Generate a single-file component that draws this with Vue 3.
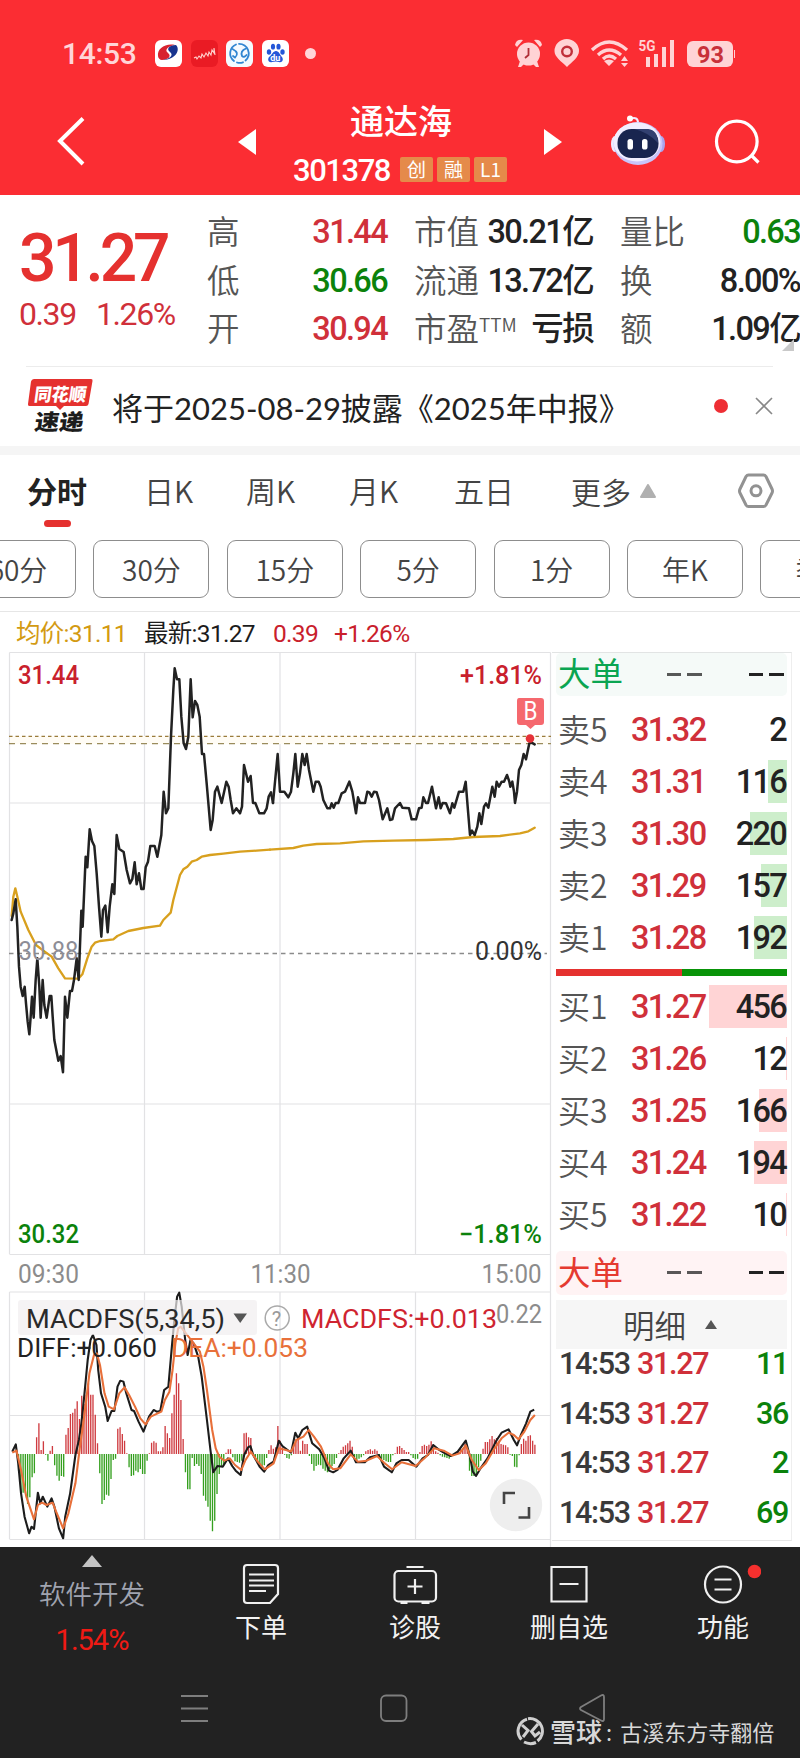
<script setup>
const quotes = [
  ['高', '31.44', 'red', '市值', '', '30.21亿', '量比', '0.63', 'green'],
  ['低', '30.66', 'green', '流通', '', '13.72亿', '换', '8.00%', 'ink'],
  ['开', '30.94', 'red', '市盈', 'TTM', '亏损', '额', '1.09亿', 'ink'],
]
const tabs = ['分时', '日K', '周K', '月K', '五日']
const periods = ['60分', '30分', '15分', '5分', '1分', '年K', '季K']
const sells = [
  ['卖5', '31.32', '2', 0], ['卖4', '31.31', '116', 19], ['卖3', '31.30', '220', 37],
  ['卖2', '31.29', '157', 26], ['卖1', '31.28', '192', 33],
]
const buys = [
  ['买1', '31.27', '456', 78], ['买2', '31.26', '12', 1], ['买3', '31.25', '166', 28],
  ['买4', '31.24', '194', 33], ['买5', '31.22', '10', 1],
]
const trades = ['11', '36', '2', '69']

const priceA = '35,840 40,820 47,778 52,860 57,980 62,1040 68,1068 74,1040 78,1090 83,1145 88,1183 92,1130 96,1070 101,1133 107,1020 112,955 118,1040 122,1133 128,1020 133,1095 140,1133 149,1068 154,1068 158,1130 163,1200 175,1262 182,1248 189,1297 195,1070 202,1133 210,1053 216,1053 222,1020 230,955 236,1020 244,812 248,860 257,650 262,682 269,568 276,603 283,618 290,700 297,800 304,890 309,810 316,797 323,877 329,800 337,733 343,762 350,585 358,627 371,636 380,690 390,730 397,717 404,667 410,733 417,700 424,747 431,747 437,682 444,665 451,618 464,618 472,650 484,585 491,455 498,520 505,505 513,290 520,150 524,85 531,118 538,118 544,230 551,310 558,327 565,290 572,118 578,232 585,183 592,195 599,230 606,342 612,342 620,430 632,570 638,540 645,455 652,440 665,489 679,425 686,440 692,480 699,520 709,505 720,520 726,500 732,375 744,425 752,408 759,489 766,489 778,520 792,520 800,505 806,470 813,457 819,489'
const priceB = '9,489 23,342 30,455 43,455 55,472 63,455 70,400 76,342 83,440 90,400 97,342 104,375 110,342 117,390 130,455 137,425 146,425 152,440 160,480 172,505 180,505 185,490 191,503 197,489 205,489 215,460 225,455 238,425 247,455 258,520 264,472 270,489 285,489 292,455 298,457 305,470 312,455 320,457 327,480 338,538 352,505 360,540 367,538 375,505 390,489 397,503 417,505 425,538 438,538 447,505 455,503 460,472 468,489 474,489 486,440 498,505 506,472 512,505 518,489 528,490 540,520 547,490 553,503 567,455 580,455 587,425 593,500 600,585 606,572 614,585 622,560 628,520 634,552 642,500 648,490 655,503 667,440 674,470 680,425 687,440 695,425 702,425 711,405 718,425 721,440 727,425 732,455 735,489 741,455 747,390 754,375 761,342 768,358 778,310 785,308 794,313'
const avgA = '35,828 40,770 46,745 52,770 62,815 85,870 108,915 130,932 155,950 175,985 195,1015 235,1016 247,1003 262,955 275,920 285,908 300,903 340,898 352,888 385,873 430,864 480,857 490,840 512,818 520,780 540,705 550,688 562,680 575,665 590,660 605,650 630,645 670,641 720,635 770,632 810,629'
const avgB = '0,629 70,624 100,617 140,612 210,610 280,604 370,602 470,600 550,597 610,591 690,588 750,580 775,574 794,563'
const diff = '35,725 45,703 52,760 60,850 70,920 83,970 90,950 97,957 108,848 115,880 122,860 135,890 147,865 155,890 168,955 180,985 186,920 200,850 215,735 225,690 232,640 240,560 250,450 258,390 265,375 275,405 280,480 288,550 300,590 307,633 318,603 326,603 335,530 343,512 352,515 360,550 375,600 382,603 395,635 409,665 425,620 438,600 447,605 457,603 468,540 480,530 490,410 497,330 505,260 511,248 518,290 528,390 535,435 543,390 552,400 565,440 575,500 590,630 600,720 608,787 620,768 635,770 650,745 662,768 672,782 686,795 696,735 707,712 714,708 722,735 740,770 753,785 765,765 780,755 795,692 805,708 830,728 842,668 850,685 862,660 876,650 890,700 910,718 925,745 938,782 950,787 962,780 980,745 1000,722 1015,757 1040,757 1055,742 1080,735 1095,770 1117,787 1130,760 1145,750 1165,750 1187,770 1205,745 1220,735 1235,705 1250,718 1265,728 1285,738 1305,725 1328,692 1340,740 1348,785 1357,798 1370,775 1390,745 1415,692 1430,668 1450,658 1465,690 1474,706 1485,675 1500,640 1512,605 1523,599'
const dea = '35,728 47,722 60,780 75,860 97,928 108,885 120,878 133,885 150,878 160,905 180,955 195,910 215,820 228,710 240,620 255,490 268,435 276,430 285,465 298,550 310,590 325,598 340,550 355,532 368,555 385,590 400,625 415,643 430,620 460,605 470,570 483,545 492,480 500,400 508,355 515,350 530,370 545,390 570,425 580,470 590,540 605,660 615,715 625,740 640,752 655,745 670,765 688,780 700,750 715,725 735,755 755,778 780,760 795,715 815,720 830,725 845,690 865,680 880,660 895,680 915,710 935,760 950,778 970,775 1000,733 1020,755 1045,752 1075,738 1095,758 1118,778 1145,757 1185,768 1210,745 1238,715 1265,722 1290,737 1310,730 1328,706 1345,750 1365,780 1385,760 1410,715 1430,685 1450,668 1465,675 1478,688 1495,665 1512,630 1525,615'
const heights = [-50, -116, -116, -118, -150, -130, -70, -58, 50, 92, 12, 38, -2, -20, 10, 24, -34, -65, -80, -66, -68, 58, 78, 120, 124, 136, 158, 105, 175, 150, 178, 212, 178, 178, 118, 32, -58, -150, -138, -122, -125, -75, -18, -14, 76, 80, 60, 40, 2, -40, -66, -64, -50, -55, -45, -60, -60, -20, 2, 34, 38, 34, 8, 8, 20, 84, 62, 48, 122, 178, 242, 212, 162, 45, -55, -106, -106, -12, -36, -30, -36, -60, -125, -140, -158, -200, -232, -200, -120, -60, -36, -30, 4, 14, 14, -10, -22, -24, -26, -20, 62, 64, 50, 48, -6, -16, -30, -36, -42, -34, -12, 12, 26, 16, 20, 84, 40, 20, -2, -12, -14, -4, 30, 44, 48, 10, 40, 30, 30, -6, -30, -50, -36, -32, -34, -44, -50, -55, -46, -36, -30, -12, 2, 12, 22, 26, 32, 40, 22, -10, -18, -14, -10, -4, 8, 12, 14, 10, 14, 10, -6, -14, -18, -22, -24, -24, -4, 2, 22, 24, 18, 12, 6, 6, -4, -12, -16, -14, 6, 24, 28, 24, 28, 38, 20, 8, 4, -4, -8, -10, -12, -14, -8, -6, 6, 10, 14, 16, 30, 22, -50, -66, -66, -60, -40, -20, 16, 36, 36, 44, 54, 44, 48, 40, 30, 28, 26, 20, -2, -6, -38, -40, -4, 30, 46, 40, 54, 56, 40, 28]
const step = (1525 - 53) / (heights.length - 1)
const bars = (up) => heights
  .map((h, i) => (h > 0 === up ? `M${(53 + i * step).toFixed(1)} 732V${732 - h}` : ''))
  .join('')
</script>

<template>
  <div class="page">
    <header class="head">
      <div class="status">
        <span class="clock">14:53</span>
        <div class="apps">
          <svg width="27" height="27" viewBox="0 0 27 27">
            <rect width="27" height="27" rx="6" fill="#fff" />
            <path d="M3 16C2 9 10 3 20 5C13 6 9 10 13 13C17 16 13 20 7 20C5 20 3 18 3 16Z" fill="#d8232f" />
            <path d="M21 5C26 10 20 20 8 20C15 19 19 15 15 12C11 9 14 5 21 5Z" fill="#17348f" />
          </svg>
          <svg width="27" height="27" viewBox="0 0 27 27">
            <rect width="27" height="27" rx="6" fill="#ea1b24" />
            <path d="M3 18L5 17L6 19L8 16L10 18L11 14L13 17L15 13L17 16L18 12L20 15L21 10L23 13V8L24 15" fill="none" stroke="#ffd0cc" stroke-width="1.1" />
          </svg>
          <svg width="27" height="27" viewBox="0 0 27 27">
            <rect width="27" height="27" rx="6" fill="#f4faff" />
            <g fill="none" stroke="#3186d2" stroke-width="1.8" stroke-linecap="round">
              <path d="M10 4.500A9.600 9.600 0 0 0 8 21M13 3.800A9.600 9.600 0 0 1 19.500 20.500M11 22.500Q14 23.500 17 22.300" />
              <path d="M6.500 9Q14 13 9 17.500L7 16M20 8.500Q14 11 16 16Q18 18 20.500 15" />
            </g>
          </svg>
          <svg width="27" height="27" viewBox="0 0 27 27">
            <rect width="27" height="27" rx="6" fill="#fff" />
            <g fill="#2456d8">
              <ellipse cx="7" cy="12" rx="2.2" ry="2.8" />
              <ellipse cx="11" cy="6.7" rx="2.1" ry="2.9" />
              <ellipse cx="16.5" cy="6.7" rx="2.1" ry="2.9" />
              <ellipse cx="20.5" cy="12" rx="2.2" ry="2.8" />
              <path d="M14 11C17 11 18 15 20 17C22 20 20 23 17 22Q14 21 10 22C7 23 5 20 7 17C10 15 11 11 14 11Z" />
            </g>
            <text x="8.2" y="20.5" class="du">du</text>
          </svg>
        </div>
        <i class="dot-pink"></i>
        <svg class="sys" width="222" height="32" viewBox="512 38 222 32">
          <g fill="#ffd3d5">
            <circle cx="527.5" cy="54" r="11.5" />
            <path d="M514 45Q515 39 522 40L516 47ZM541 45Q540 39 533 40L539 47Z" />
            <path d="M519 61L517 67H520L524 63ZM536 61L538 67H535L531 63Z" />
            <path d="M566 67C560 61 553.500 57 553.500 51A12.200 12 0 0 1 578 51C578 57 571 62 566 67Z" />
            <path d="M603 61Q608 58 613 61L608 66ZM620 61L623.500 56L627 61ZM620 63L623.500 67L627 63Z" />
            <path d="M645 57h4v10h-4zM653 54h4v13h-4zM661 47h4v20h-4zM669 40h4v27h-4z" />
            <rect x="686" y="41" width="46" height="26" rx="6" />
            <path d="M733 50h1.500v8h-1.500z" />
          </g>
          <path d="M527.500 48V55L524 58" fill="none" stroke="#b03038" stroke-width="1.800" />
          <circle cx="566" cy="51.500" r="4.800" fill="none" stroke="#c12f3a" stroke-width="2.400" />
          <g fill="none" stroke="#ffd3d5" stroke-width="3.300">
            <path d="M591 50Q608 34 626 50M597 55Q608 45 620 55" />
            <path d="M602 59Q608 53 615 59" />
          </g>
          <text x="637.500" y="50.500" class="g5" textLength="17" lengthAdjust="spacingAndGlyphs">5G</text>
          <text x="696" y="62.500" class="bat" textLength="27" lengthAdjust="spacingAndGlyphs">93</text>
        </svg>
      </div>
      <div class="titlebar">
        <svg class="back" width="30" height="50" viewBox="0 0 30 50"><path d="M27 2.500L4 25L27 48" /></svg>
        <svg class="prev" width="18" height="26" viewBox="0 0 18 26"><path d="M18 0V26L0 13Z" /></svg>
        <div class="name">
          <h1>通达海</h1>
          <p><b class="num">301378</b><i>创</i><i>融</i><i>L1</i></p>
        </div>
        <svg class="next" width="18" height="26" viewBox="0 0 18 26"><path d="M0 0V26L18 13Z" /></svg>
        <svg class="robot" width="56" height="51" viewBox="610 115 56 51">
          <path d="M630 119Q638 116 638 123" fill="none" stroke="#f4e9ff" stroke-width="2" />
          <circle cx="630" cy="118.500" r="3" fill="#fff" />
          <ellipse cx="615" cy="144" rx="4" ry="8" fill="#efeaff" />
          <ellipse cx="661" cy="144" rx="4" ry="8" fill="#a9a4ee" />
          <ellipse cx="638" cy="143.500" rx="24.500" ry="21.500" fill="#c8c4fa" />
          <ellipse cx="637" cy="142" rx="23.500" ry="19.500" fill="#f1eeff" />
          <rect x="617.500" y="129" width="41" height="29" rx="14" fill="#19254f" />
          <path d="M634 129H648Q658 130 658 143Q648 132 634 129Z" fill="#324070" />
          <rect x="627.500" y="139" width="5.500" height="10.500" rx="2.600" fill="#fff" />
          <rect x="642" y="139" width="5.500" height="10.500" rx="2.600" fill="#fff" />
        </svg>
        <svg class="search" width="46" height="46" viewBox="714 118 46 46">
          <circle cx="736.800" cy="141.500" r="20.300" /><path d="M751 155L758.500 162.500" />
        </svg>
      </div>
    </header>

    <section class="quote">
      <div class="price">
        <strong class="num">31.27</strong>
        <p class="num"><span>0.39</span><span>1.26%</span></p>
      </div>
      <div class="stats">
        <div v-for="q in quotes" :key="q[0]" class="stat">
          <label>{{ q[0] }}</label><b class="num" :class="q[2]">{{ q[1] }}</b>
          <label class="l2">{{ q[3] }}<sup v-if="q[4]">{{ q[4] }}</sup></label><b class="num ink">{{ q[5] }}</b>
          <label class="l3">{{ q[6] }}</label><b class="num" :class="q[8]">{{ q[7] }}</b>
        </div>
        <svg class="corner" width="12" height="12"><path d="M12 0V12H0Z" fill="#c9c9c9" /></svg>
      </div>
    </section>

    <section class="news">
      <svg width="68" height="56" viewBox="27 379 68 56">
        <path d="M34 380H91Q93 380 92.500 382L88.500 405Q88 407 86 407H64L60 411L56 407H29.500Q27.500 407 28 405L31 382.500Q31.500 380 34 380Z" fill="#e5312f" />
        <g transform="skewX(-8)">
          <text x="90" y="402" class="ths" textLength="52" lengthAdjust="spacingAndGlyphs">同花顺</text>
          <text x="94.500" y="431.500" class="sd" textLength="49" lengthAdjust="spacingAndGlyphs">速递</text>
        </g>
      </svg>
      <span class="headline">将于2025-08-29披露《2025年中报》</span>
      <i class="reddot"></i>
      <svg class="close" width="18" height="18" viewBox="0 0 18 18"><path d="M1 1L17 17M17 1L1 17" /></svg>
    </section>

    <nav class="tabs">
      <span v-for="(t, i) in tabs" :key="t" :class="{ on: i === 0 }">{{ t }}</span>
      <span class="more">更多<svg width="16" height="14" viewBox="0 0 16 14"><path d="M8 1L15 13H1Z" fill="#b0b0b0" stroke="#b0b0b0" stroke-width="2" stroke-linejoin="round" /></svg></span>
      <svg class="hex" width="36" height="36" viewBox="0 0 36 36">
        <path d="M10.500 2H25.500Q27 2 28 3.500L34 16Q35 18 34 20L28 32Q27 33.500 25.500 33.500H10.500Q9 33.500 8 32L2 20Q1 18 2 16L8 3.500Q9 2 10.500 2Z" />
        <circle cx="18" cy="17.800" r="5" />
      </svg>
    </nav>
    <div class="periods"><span v-for="p in periods" :key="p">{{ p }}</span></div>

    <p class="legend num"><span class="avg">均价:31.11</span><span class="last">最新:31.27</span><span class="chg">0.39</span><span>+1.26%</span></p>

    <main class="body">
      <svg class="chart" width="552" height="895" viewBox="0 652 552 895">
        <path class="grid" d="M9.500 652.500H550.500M9.500 803H550.500M9.500 1104H550.500M9.500 1254.500H550.500M9.500 652.500V1254M144.500 652.500V1254M280 652.500V1254M415.500 652.500V1254M550.500 652.500V1547M9.500 1292H550.500M9.500 1415.500H550.500M9.500 1539.500H550.500M9.500 1292V1539M144.500 1292V1539M280 1292V1539M415.500 1292V1539" />
        <rect x="10" y="736" width="540" height="8" fill="#fffcf5" />
        <path d="M9 736.300H551" stroke="#9a7c3c" stroke-width="1.300" stroke-dasharray="3.500 3" />
        <path d="M9 743.700H551" stroke="#9a8c5c" stroke-width="1.300" stroke-dasharray="6 5" />
        <path d="M9 953.500H547" stroke="#8b8b8b" stroke-width="1.300" stroke-dasharray="4.500 4" />
        <g transform="translate(0 640) scale(.33333)" class="line">
          <polyline class="gold" :points="avgA" />
          <polyline class="black" :points="priceA" />
          <g transform="translate(810 0)">
            <polyline class="gold" :points="avgB" />
            <polyline class="black" :points="priceB" />
          </g>
        </g>
        <path d="M519 698H541Q544 698 544 701V722Q544 725 541 725H535L530.500 729L526 725H520Q517 725 517 722V701Q517 698 519 698Z" fill="#f5686e" />
        <text x="523.500" y="719.500" class="t" fill="#fff" textLength="14" lengthAdjust="spacingAndGlyphs">B</text>
        <circle cx="530" cy="738.500" r="4.300" fill="#e53238" />

        <g class="t">
          <text x="18" y="683.500" class="m" fill="#c9202c" textLength="61" lengthAdjust="spacingAndGlyphs">31.44</text>
          <text x="460" y="683.500" class="m" fill="#c9202c" textLength="82" lengthAdjust="spacingAndGlyphs">+1.81%</text>
          <text x="18.500" y="960" fill="#8d8d96" textLength="60" lengthAdjust="spacingAndGlyphs">30.88</text>
          <text x="475" y="960" fill="#333" textLength="67" lengthAdjust="spacingAndGlyphs">0.00%</text>
          <text x="18" y="1242.500" class="m" fill="#0b820b" textLength="61" lengthAdjust="spacingAndGlyphs">30.32</text>
          <text x="459" y="1242.500" class="m" fill="#0b820b" textLength="83" lengthAdjust="spacingAndGlyphs">−1.81%</text>
          <g fill="#8c8c8c">
            <text x="18" y="1282.500" textLength="61" lengthAdjust="spacingAndGlyphs">09:30</text>
            <text x="250.500" y="1282.500" textLength="60" lengthAdjust="spacingAndGlyphs">11:30</text>
            <text x="481.500" y="1282.500" textLength="60" lengthAdjust="spacingAndGlyphs">15:00</text>
          </g>
        </g>

        <g transform="translate(0 1210) scale(.35075 .33333)">
          <path :d="bars(true)" stroke="#cf3b40" stroke-width="3.800" />
          <path :d="bars(false)" stroke="#35a01f" stroke-width="3.800" />
          <g class="macd">
            <polyline :points="diff" stroke="#1c1c1c" />
            <polyline :points="dea" stroke="#e8703a" />
          </g>
        </g>
        <rect x="18" y="1300" width="239" height="35" rx="3" fill="#f1eef0" fill-opacity=".7" />
        <path d="M233.500 1313.500H247L240.200 1323Z" fill="#555" />
        <circle cx="277.200" cy="1318" r="12" fill="none" stroke="#aaa" stroke-width="1.500" />
        <text x="271.800" y="1325.500" class="q">?</text>
        <g class="t">
          <text x="26" y="1327.500" fill="#2a2a2a" textLength="199" lengthAdjust="spacingAndGlyphs">MACDFS(5,34,5)</text>
          <text x="496" y="1323" fill="#8c8c8c" textLength="46" lengthAdjust="spacingAndGlyphs">0.22</text>
          <text x="301" y="1327.500" fill="#cf2430" textLength="196" lengthAdjust="spacingAndGlyphs">MACDFS:+0.013</text>
          <text x="17" y="1357" fill="#222" textLength="140" lengthAdjust="spacingAndGlyphs">DIFF:+0.060</text>
          <text x="171" y="1357" fill="#e8703a" textLength="137" lengthAdjust="spacingAndGlyphs">DEA:+0.053</text>
        </g>
        <circle cx="516" cy="1505" r="26.200" fill="#eee" />
        <path d="M504 1504V1493H515M518.500 1517.500H529V1507" fill="none" stroke="#444" stroke-width="2.600" />
      </svg>

      <aside class="book">
        <div class="big sellbig"><em>大单</em><s class="g"></s><s></s></div>
        <div class="rows">
          <div v-for="r in sells" :key="r[0]" class="row sell">
            <label>{{ r[0] }}</label><b class="num red">{{ r[1] }}</b>
            <b class="num qty"><i :style="{ width: r[3] + 'px' }"></i><span>{{ r[2] }}</span></b>
          </div>
        </div>
        <div class="ratio"><i></i></div>
        <div class="rows">
          <div v-for="r in buys" :key="r[0]" class="row buy">
            <label>{{ r[0] }}</label><b class="num red">{{ r[1] }}</b>
            <b class="num qty"><i :style="{ width: r[3] + 'px' }"></i><span>{{ r[2] }}</span></b>
          </div>
        </div>
        <div class="big buybig"><em>大单</em><s class="g"></s><s></s></div>
        <div class="detail">明细<svg width="12" height="9"><path d="M6 0L12 9H0Z" fill="#555" /></svg></div>
        <div class="trades">
          <div v-for="t in trades" :key="t" class="num"><span>14:53</span><b class="red">31.27</b><b class="green">{{ t }}</b></div>
        </div>
      </aside>
    </main>

    <footer class="foot">
      <div class="menu">
        <div class="index">
          <svg width="20" height="12"><path d="M10 0L20 12H0Z" fill="#c4c4c4" /></svg>
          <span>软件开发</span><b>1.54%</b>
        </div>
        <div class="item">
          <svg width="46" height="44" viewBox="238 1562 46 44"><path d="M247 1565H275Q278 1565 278 1568V1594L270 1603H247Q244 1603 244 1600V1568Q244 1565 247 1565Z" /><path d="M249 1574.500H274M249 1580.500H274M249 1585.500H274M249 1591H266" /></svg>
          <span>下单</span>
        </div>
        <div class="item">
          <svg width="46" height="44" viewBox="391.500 1562 46 44"><rect x="394" y="1571" width="41.500" height="30.500" rx="4" /><path d="M406 1567H423M414.500 1579V1594M407 1586.500H422M400 1603H407M421 1603H429" /></svg>
          <span>诊股</span>
        </div>
        <div class="item">
          <svg width="46" height="44" viewBox="545.500 1562 46 44"><path d="M551 1567H586V1601.500H551ZM559 1584H578" /></svg>
          <span>删自选</span>
        </div>
        <div class="item">
          <svg width="76" height="44" viewBox="684.500 1562 76 44"><circle cx="722.500" cy="1584.500" r="18" /><path d="M714 1579.500H731M714 1589.500H731" /><circle class="alert" cx="754" cy="1571.500" r="6.800" /></svg>
          <span>功能</span>
        </div>
      </div>
      <div class="sysnav">
        <svg width="28" height="30" viewBox="0 0 28 30"><path d="M0 2H27M0 14.500H27M0 27H27" /></svg>
        <svg width="28" height="30" viewBox="0 0 28 30"><rect x="1" y="1.500" width="25.500" height="25.500" rx="5" /></svg>
        <svg width="28" height="30" viewBox="0 0 28 30"><path d="M25 3V25Q25 28 22 26.500L2 16Q0 14.500 2 13L22 1.500Q25 0 25 3Z" /></svg>
      </div>
      <div class="mark">
        <svg width="29" height="30" viewBox="0 0 29 30"><path d="M11 3.200A12.300 12.300 0 0 0 5.500 23.500M12 2.700A12.500 12.500 0 0 1 21.500 25M8 26Q14 29 20 26.500M6 9L12 14.500L7 21M22 8L15.500 15.500L19 20L24 16" /></svg>
        <b>雪球</b><span>:</span><span>古溪东方寺翻倍</span>
      </div>
    </footer>
  </div>
</template>

<style>
body { margin: 0; background: #fff; }
</style>
<style scoped>
.page { width: 800px; height: 1758px; overflow: hidden; background: #fff; color: #222; font-family: "Noto Sans CJK SC", sans-serif; }
.page * { box-sizing: border-box; }
svg { display: block; flex: none; }
i, em { font-style: normal; }
h1, p { margin: 0; }
.num { font-family: Roboto, "Noto Sans CJK SC", sans-serif; font-weight: 500; letter-spacing: -.045em; }
.red { color: #d0303a; }
.green { color: #0b820b; }
.ink { color: #222; }
.head { height: 195px; background: #fb2d33; color: #fff; }
.status { display: flex; align-items: center; height: 96px; padding: 11px 0 0 62px; }
.clock { width: 93px; font: 500 30px/30px Roboto, sans-serif; letter-spacing: -.3px; color: #ffd5d8; }
.apps { display: flex; gap: 8.500px; }
.dot-pink { width: 11px; height: 11px; margin-left: 16px; border-radius: 50%; background: #ffd5d8; }
.sys { margin-left: 197px; }
.du { font: 700 9px Roboto, sans-serif; fill: #fff; }
.g5 { font: 700 14px Roboto, sans-serif; fill: #ffd3d5; }
.bat { font: 700 23px Roboto, sans-serif; fill: #c8303a; }
.titlebar { display: flex; align-items: flex-start; height: 99px; }
.titlebar svg { fill: none; stroke: #fff; stroke-width: 3.500; }
.titlebar .prev, .titlebar .next { fill: #fff; stroke: none; margin-top: 33px; }
.titlebar .robot { stroke: none; margin: 19px 0 0 48px; }
.titlebar .search { margin: 22px 0 0 48px; stroke-width: 3.200; }
.titlebar .back { margin: 20px 0 0 56px; stroke-width: 4; }
.prev { margin-left: 152px; }
.name { width: 216px; margin: 0 35px 0 37px; }
.name h1 { font-size: 34px; line-height: 44px; font-weight: 500; margin-top: 2px; text-align: center; }
.name p { display: flex; gap: 4px; margin-top: 14px; white-space: nowrap; text-align: center; }
.name b { width: 103px; font-size: 31px; line-height: 29px; letter-spacing: -1.450px; text-align: left; }
.name i { width: 33px; height: 25px; margin-top: 1px; border-radius: 2px; background: #e58a4a; font-size: 19px; line-height: 24px; }
.quote { display: flex; height: 171px; padding-top: 12px; }
.price { width: 207px; padding-left: 19px; color: #e5312f; }
.price strong { display: block; margin-top: 23px; font-size: 66px; line-height: 58px; letter-spacing: -4.200px; }
.price p { display: flex; margin-top: 6px; font-size: 32px; line-height: 40px; letter-spacing: -1.400px; color: #d0303a; font-weight: 400; }
.price p span:first-child { width: 77px; }
.stats { flex: 1; position: relative; }
.stat { display: grid; grid-template-columns: 60px 120px 86px 120px 76px 131px; height: 48.500px; line-height: 51px; font-size: 32.500px; letter-spacing: -.5px; }
.stat label { font-size: 32.500px; line-height: 46px; font-weight: 350; color: #555; white-space: nowrap; letter-spacing: 0; }
.stat .l2, .stat .l3 { padding-left: 27px; }
.stat b { text-align: right; white-space: nowrap; letter-spacing: -1.650px; }
.stat sup { font-size: 19px; line-height: 0; vertical-align: 9px; }
.corner { position: absolute; right: 6px; bottom: 15px; }
.news { display: flex; align-items: center; height: 89px; margin: 0; padding: 0 27px; border-bottom: 9px solid #f5f5f5; background: linear-gradient(#ececec, #ececec) 26px 0 / 747px 1px no-repeat; }
.headline { margin: 0 0 0 17px; width: 603px; font-family: Lato, "Noto Sans CJK SC", sans-serif; font-size: 31px; letter-spacing: 0; white-space: nowrap; font-weight: 400; }
.reddot { width: 14px; height: 14px; margin-left: 1px; border-radius: 50%; background: #ee2e34; }
.close { margin-left: 27px; fill: none; stroke: #888; stroke-width: 1.600; }
.ths { font: 900 18px "Noto Sans CJK SC", sans-serif; fill: #fff; }
.sd { font: 900 22px "Noto Sans CJK SC", sans-serif; fill: #1c1c1c; }
.tabs { display: grid; grid-template-columns: 117px 102px 103px 105px 117px 167px 40px; height: 85px; padding-left: 28px; font-size: 30px; line-height: 71px; font-weight: 350; color: #444; }
.tabs span { position: relative; left: -1px; white-space: nowrap; }
.tabs .on { font-weight: 700; color: #222; }
.tabs .on::after { content: ""; position: absolute; left: 17px; top: 65px; width: 27px; height: 7px; border-radius: 4px; background: #e5312f; }
.more { display: flex; align-items: center; gap: 9px; height: 72px; }
.hex { margin: 18px 0 0 -1px; fill: none; stroke: #929292; stroke-width: 3; }
.periods { display: flex; gap: 17.400px; height: 72px; margin-left: -40px; border-bottom: 1px solid #e6e6e6; width: 840px; overflow: hidden; }
.periods span { flex: none; width: 116px; height: 58px; border: 1.500px solid #8d8d8d; border-radius: 9px; font-size: 28px; line-height: 56px; font-weight: 350; text-align: center; color: #444; }
.legend { display: flex; height: 40px; padding-left: 16px; font-size: 24.500px; line-height: 43px; letter-spacing: -.7px; color: #c9202c; white-space: nowrap; font-weight: 400; }
.avg { width: 128px; color: #d39a12; }
.last { width: 129px; color: #1c1c1c; }
.chg { width: 61px; }
.body { display: flex; height: 895px; }
.grid { fill: none; stroke: #e2e2e4; stroke-width: 1.200; }
.line polyline { fill: none; stroke-linejoin: round; stroke-linecap: round; }
.gold { stroke: #d8a01e; stroke-width: 7; }
.black { stroke: #222; stroke-width: 7.500; }
.macd polyline { fill: none; stroke-width: 6; stroke-linejoin: round; }
.t { font: 400 25.500px Roboto, sans-serif; }
.m { font-weight: 500; }
.q { font: 400 20px Roboto, sans-serif; fill: #999; }
.book { width: 240px; height: 889px; padding-left: 4px; border-top: 1px solid #e2e4e4; border-right: 1px solid #eee; border-bottom: 1px solid #e6e6e6; }
.big { display: flex; align-items: center; width: 231px; height: 43px; padding-left: 2px; border-radius: 5px; font-size: 32.500px; line-height: 40px; }
.big em { width: 109px; margin-top: -6px; }
.sellbig { background: #f5faf8; color: #0aa551; }
.buybig { height: 44px; margin-top: 6px; background: #fff3f4; color: #e53a30; }
.buybig em { margin-top: -4px; }
.big s { width: 35px; height: 3px; background: linear-gradient(90deg, #222 14px, transparent 14px 20px, #222 20px); }
.big .g { opacity: .75; margin-right: 47px; }
.rows { margin-top: 9px; }
.sellbig + .rows { margin: 12px 0 2px; }
.row { display: grid; grid-template-columns: 75px 79px 77px; width: 231px; height: 51.900px; font-size: 32.500px; line-height: 45px; }
.row label { font-size: 32px; line-height: 41px; font-weight: 350; color: #555; padding-left: 2px; }
.row b { letter-spacing: -1.700px; }
.qty { position: relative; text-align: right; padding-right: 1px; }
.qty span { position: relative; color: #222; }
.qty i { position: absolute; right: 0; top: 0; height: 43px; background: #cdeecb; }
.buy .qty i { background: #ffd4d5; }
.ratio { width: 231px; height: 7px; margin-top: 0; background: #089308; }
.ratio i { display: block; width: 126px; height: 7px; background: #e5312f; }
.detail { display: flex; align-items: center; gap: 19px; width: 231px; height: 49px; margin-top: 5px; padding-left: 67px; background: #f6f6f6; font-size: 31.500px; font-weight: 350; color: #444; }
.trades div { display: grid; grid-template-columns: 78px 80px 71px; height: 49.600px; padding-left: 3px; font-size: 30.500px; line-height: 30px; letter-spacing: -1.300px; color: #3a3a3a; }
.trades b { font-weight: 500; }
.trades b:last-child { text-align: right; }
.foot { height: 211px; background: #222; position: relative; }
.menu { display: grid; grid-template-columns: 184px repeat(4, 154px); height: 147px; }
.index, .item { display: flex; flex-direction: column; align-items: center; }
.index svg { margin-top: 8px; }
.index span { margin-top: 8px; font-size: 26.500px; line-height: 36px; font-weight: 350; color: #a0a4b0; }
.index b { margin-top: 12px; font: 400 29px/34px Roboto, sans-serif; letter-spacing: -1px; color: #f01a14; }
.item svg { margin-top: 15px; fill: none; stroke: #f0f0f0; stroke-width: 2.200; }
.item .alert { fill: #f5302e; stroke: none; }
.item span { margin-top: 1px; font-size: 26px; line-height: 38px; color: #f2f2f2; }
.sysnav { display: flex; gap: 171px; padding-left: 181px; }
.sysnav svg { fill: none; stroke: #7e7e7e; stroke-width: 1.800; }
.mark { position: absolute; left: 516px; top: 166px; display: flex; align-items: center; height: 36px; color: #d8d8d8; font-size: 22px; line-height: 36px; white-space: nowrap; }
.mark svg { fill: none; stroke: #d0d0d0; stroke-width: 3; margin-right: 5px; }
.mark b { font-size: 26px; font-weight: 500; margin-right: 4px; }
.mark span:last-child { margin-left: 8px; }
</style>
